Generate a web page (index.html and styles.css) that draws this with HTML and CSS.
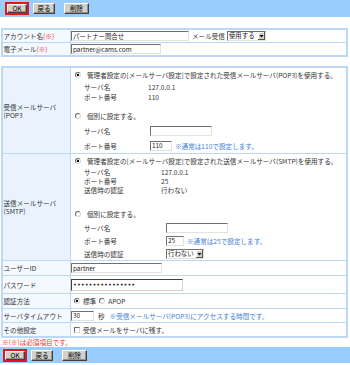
FILE: index.html
```html
<!DOCTYPE html>
<html lang="ja">
<head>
<meta charset="utf-8">
<title>アカウント設定</title>
<link rel="stylesheet" href="styles.css">
</head>
<body>
<div class="bar bar-top">
  <span class="focus"><button class="btn btn-ok">OK</button></span>
  <button class="btn btn-back">戻る</button>
  <button class="btn btn-del">削除</button>
</div>

<table class="form form-1">
  <tr class="r12">
    <th>アカウント名<span class="req">(※)</span></th>
    <td class="val"><div class="line"><input class="in w-name" value="パートナー問合せ"><span class="inl">メール受信</span><span class="sel w-use">使用する<svg class="arrow" width="7" height="8" viewBox="0 0 7 8"><rect x="0" y="0" width="7" height="8" fill="#D4D0C8"/><path d="M0 0H7V1H1V8H0Z" fill="#fff"/><path d="M7 0V8H0V7H6V0Z" fill="#555"/><path d="M1.5 3H5.5L3.5 5.5Z" fill="#000"/></svg></span></div></td>
  </tr>
  <tr class="r12">
    <th>電子メール<span class="req">(※)</span></th>
    <td class="val"><div class="line"><input class="in w-mail" value="partner@cams.com"></div></td>
  </tr>
</table>

<table class="form form-2">
  <tr class="r-pop">
    <th class="lab2">受信メールサーバ(POP3</th>
    <td class="opts">
      <div class="opt"><span class="radio on"></span><span>管理者設定の[メールサーバ設定]で設定された受信メールサーバ(POP3)を使用する。</span></div>
      <div class="sub sub-pop-static">
        <span>サーバ名</span><span>127.0.0.1</span>
        <span>ポート番号</span><span>110</span>
      </div>
      <div class="opt opt-pop-2"><span class="radio"></span><span>個別に設定する。</span></div>
      <div class="sub sub-pop-input">
        <span>サーバ名</span><span class="line"><input class="in w-host"></span>
        <span>ポート番号</span><span class="line"><input class="in w-port3" value="110"><span class="note">※通常は110で設定します。</span></span>
      </div>
    </td>
  </tr>
  <tr class="r-smtp">
    <th class="lab2 lab-smtp">送信メールサーバ(SMTP)</th>
    <td class="opts">
      <div class="opt"><span class="radio on"></span><span>管理者設定の[メールサーバ設定]で設定された送信メールサーバ(SMTP)を使用する。</span></div>
      <div class="sub sub-smtp-static">
        <span>サーバ名</span><span>127.0.0.1</span>
        <span>ポート番号</span><span>25</span>
        <span>送信時の認証</span><span>行わない</span>
      </div>
      <div class="opt opt-smtp-2"><span class="radio"></span><span>個別に設定する。</span></div>
      <div class="sub sub-smtp-input">
        <span>サーバ名</span><span class="line"><input class="in w-host"></span>
        <span>ポート番号</span><span class="line"><input class="in w-port2" value="25"><span class="note">※通常は25で設定します。</span></span>
        <span>送信時の認証</span><span class="line"><span class="sel w-auth">行わない<svg class="arrow" width="7" height="8" viewBox="0 0 7 8"><rect x="0" y="0" width="7" height="8" fill="#D4D0C8"/><path d="M0 0H7V1H1V8H0Z" fill="#fff"/><path d="M7 0V8H0V7H6V0Z" fill="#555"/><path d="M1.5 3H5.5L3.5 5.5Z" fill="#000"/></svg></span></span>
      </div>
    </td>
  </tr>
  <tr class="r-user">
    <th>ユーザーID</th>
    <td class="val"><div class="line"><input class="in w-user" value="partner"></div></td>
  </tr>
  <tr class="r-pw">
    <th>パスワード</th>
    <td class="val"><div class="line"><input class="in in-pw w-pw" type="password" value="abcdefghijklmnop"></div></td>
  </tr>
  <tr class="r-auth">
    <th>認証方法</th>
    <td class="val"><div class="line ind2"><span class="radio on"></span><span class="rl">標準</span><span class="radio"></span><span class="rl">APOP</span></div></td>
  </tr>
  <tr class="r-13">
    <th>サーバタイムアウト</th>
    <td class="val"><div class="line"><input class="in w-time" value="30"><span class="sec">秒</span><span class="note">※受信メールサーバ(POP3)にアクセスする時間です。</span></div></td>
  </tr>
  <tr class="r-13">
    <th>その他設定</th>
    <td class="val"><div class="line ind2"><span class="check"></span><span>受信メールをサーバに残す。</span></div></td>
  </tr>
</table>

<p class="required">※(※)は必須項目です。</p>

<div class="bar bar-bottom">
  <span class="focus"><button class="btn btn-ok">OK</button></span>
  <button class="btn btn-back">戻る</button>
  <button class="btn btn-del">削除</button>
</div>
</body>
</html>
```

FILE: styles.css
```css
* {
  box-sizing: border-box;
}

html,
body {
  margin: 0;
  padding: 0;
  background: #fff;
}

body {
  width: 350px;
  height: 365px;
  overflow: hidden;
  font-family: "Noto Sans CJK JP", "Noto Sans", sans-serif;
  font-size: 6.6px;
  line-height: 10px;
  color: #333;
}

/* button bars */
.bar {
  display: flex;
  align-items: center;
  background: #99CCFF;
}

.bar-top {
  height: 17px;
  padding-left: 5px;
  margin-bottom: 11px;
}

.bar-bottom {
  height: 16px;
  padding-left: 3px;
}

.focus {
  display: flex;
  border: 2px solid #E8141C;
}

.btn {
  display: flex;
  align-items: center;
  justify-content: center;
  height: 11px;
  margin: 0;
  padding: 0;
  font-family: "Noto Sans CJK JP", sans-serif;
  font-size: 6.6px;
  line-height: 1;
  color: #000;
  background: #D4D0C8;
  border: 1px solid;
  border-color: #fff #404040 #404040 #fff;
  box-shadow: inset -1px -1px 0 #909090;
}

.btn-ok {
  width: 20px;
  height: 9px;
}

.btn-back {
  width: 22px;
  margin-left: 4px;
}

.btn-del {
  width: 25px;
  margin-left: 9px;
}

/* tables */
.form {
  width: 347px;
  margin-left: 1px;
  border: 1px solid #BCD8F4;
  border-collapse: separate;
  border-spacing: 1px;
  background: #BCD8F4;
  table-layout: fixed;
}

.form-1 {
  margin-bottom: 9px;
}

.form th,
.form td {
  padding: 0;
  background: #fff;
  text-align: left;
  font-weight: normal;
  vertical-align: middle;
}

.form th {
  width: 67px;
  padding-left: 0.5px;
  background: #F4F9FF;
  line-height: 8px;
}

.form th.lab2 {
  background: #EAF3FD;
}

.lab-smtp {
  padding-top: 10px;
}

.val {
  padding-left: 2px;
}

.r12 {
  height: 12px;
}

.r-pop {
  height: 85px;
}

.r-smtp {
  height: 106px;
}

.r-user {
  height: 14px;
}

.r-pw {
  height: 17px;
}

.r-auth {
  height: 14px;
}

.r-13 {
  height: 13px;
}

.line {
  display: flex;
  align-items: center;
}

.ind2 {
  padding-left: 3px;
}

.req {
  color: #F03030;
}

/* inputs */
.in {
  height: 10px;
  margin: 0;
  padding: 0 1px;
  font-family: "Noto Sans CJK JP", sans-serif;
  font-size: 6.4px;
  line-height: 8px;
  color: #222;
  background: #fff;
  border: 1px solid;
  border-color: #707070 #E2E2E2 #E2E2E2 #707070;
  outline: none;
}

.in-pw {
  height: 12px;
  font-family: "DejaVu Sans", sans-serif;
  font-size: 6.6px;
  border-color: #404040 #D0D0D0 #D0D0D0 #404040;
}

.w-name { width: 118px; }
.w-mail { width: 90px; }
.w-host { width: 62px; }
.w-port3 { width: 22px; }
.w-port2 { width: 18px; }
.w-user { width: 91px; }
.w-pw { width: 112px; }
.w-time { width: 23px; }

.inl {
  margin: 0 2px 0 3px;
}

.sel {
  display: flex;
  align-items: center;
  height: 10px;
  padding: 0 0 0 1px;
  font-size: 6.4px;
  color: #222;
  background: #fff;
  border: 1px solid;
  border-color: #707070 #E2E2E2 #E2E2E2 #707070;
}

.sel .arrow {
  display: block;
  margin-left: auto;
}

.w-use { width: 39px; }
.w-auth { width: 38px; }

.note {
  margin-left: 3px;
  color: #3F7ED8;
}

.sec {
  margin: 0 2px 0 4px;
}

/* radio & checkbox */
.radio {
  flex: none;
  width: 6px;
  height: 6px;
  border-radius: 50%;
  border: 1px solid;
  border-color: #6A6A6A #D8D8D8 #D8D8D8 #6A6A6A;
  background: #fff;
}

.radio.on {
  background: radial-gradient(circle, #111 0 1.1px, #fff 1.6px);
}

.rl {
  margin: 0 3px 0 3px;
}

.check {
  flex: none;
  width: 6px;
  height: 6px;
  margin-right: 3px;
  border: 1px solid;
  border-color: #6A6A6A #D8D8D8 #D8D8D8 #6A6A6A;
  background: #fff;
}

/* option cells */
.opts {
  padding: 2px 0 0 4px !important;
  vertical-align: top !important;
}

.opt {
  display: flex;
  align-items: center;
  height: 10px;
}

.opt .radio {
  margin-right: 6px;
}

.sub {
  display: grid;
  align-items: center;
  margin-left: 9px;
}

.sub-pop-static {
  grid-template-columns: 64px auto;
  grid-auto-rows: 10px;
  margin-top: 2px;
}

.opt-pop-2 {
  margin-top: 9px;
}

.sub-pop-input {
  grid-template-columns: 66px auto;
  grid-auto-rows: 15px;
  margin-top: 2px;
}

.sub-smtp-static {
  grid-template-columns: 77px auto;
  grid-auto-rows: 9px;
  margin-top: 1px;
}

.opt-smtp-2 {
  margin-top: 15px;
}

.sub-smtp-input {
  grid-template-columns: 82px auto;
  grid-auto-rows: 13px;
  margin-top: 2px;
}

.required {
  margin: 0;
  padding-left: 2px;
  height: 9px;
  line-height: 9px;
  color: #F03030;
}
```
